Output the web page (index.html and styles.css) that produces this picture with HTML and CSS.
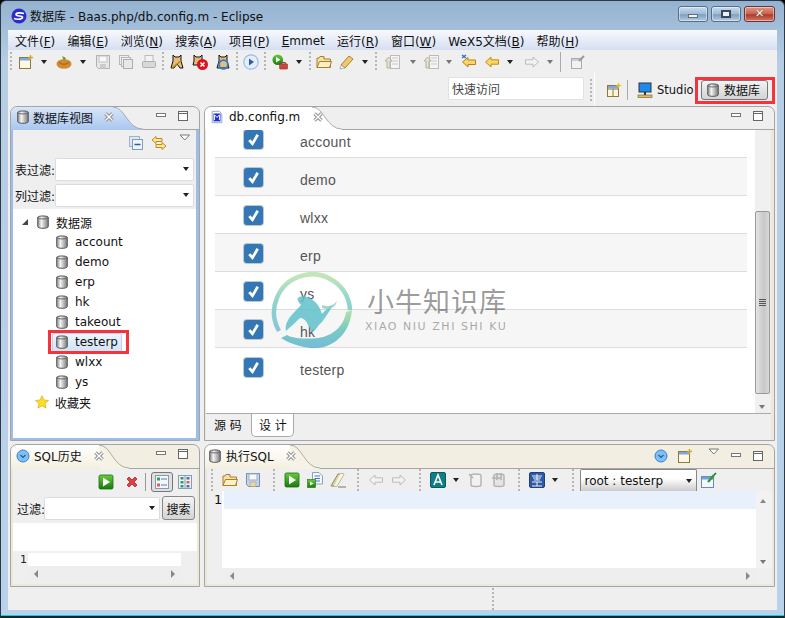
FILE: index.html
```html
<!DOCTYPE html>
<html lang="zh">
<head>
<meta charset="utf-8">
<title>数据库 - Baas.php/db.config.m - Eclipse</title>
<link rel="stylesheet" href="styles.css">
</head>
<body>
<svg class="defs" width="0" height="0">
  <defs>
    <linearGradient id="blueTab" x1="0" x2="0" y1="0" y2="1"><stop offset="0" stop-color="#d8e6f8"/><stop offset="1" stop-color="#a9c6f0"/></linearGradient>
    <linearGradient id="cyl" x1="0" x2="1" y1="0" y2="0"><stop offset="0" stop-color="#8a8a8a"/><stop offset=".35" stop-color="#f4f4f4"/><stop offset="1" stop-color="#777"/></linearGradient>
    <linearGradient id="grn" x1="0" x2="0" y1="0" y2="1"><stop offset="0" stop-color="#6ccb3a"/><stop offset="1" stop-color="#167a10"/></linearGradient>
    <linearGradient id="ring" x1="0" x2="0" y1="0" y2="1"><stop offset="0" stop-color="#b6e0a4"/><stop offset=".5" stop-color="#72c9c0"/><stop offset="1" stop-color="#6fb8d6"/></linearGradient>
    <symbol id="db" viewBox="1.5 1 13 14.5"><path d="M2.5 3.5C2.5 1.5 13.5 1.5 13.5 3.5V13C13.5 15.4 2.5 15.4 2.5 13Z" fill="url(#cyl)" stroke="#555"/><path d="M2.5 3.5C2.5 5.6 13.5 5.6 13.5 3.5" fill="none" stroke="#666"/></symbol>
    <symbol id="x" viewBox="0 0 12 12"><path d="M2.5 2.5L9.5 9.5M9.5 2.5L2.5 9.5" stroke="#8d8d8d" stroke-width="3.2" fill="none"/><path d="M2.5 2.5L9.5 9.5M9.5 2.5L2.5 9.5" stroke="#fff" stroke-width="1.4" fill="none"/></symbol>
    <symbol id="min" viewBox="0 0 12 12"><rect x="1.5" y="3.5" width="9" height="3" fill="#fff" stroke="#777"/></symbol>
    <symbol id="max" viewBox="0 0 12 12"><rect x="1.5" y="1.5" width="9" height="9" fill="#fff" stroke="#666"/><path d="M1.5 3.5H10.5" stroke="#666"/></symbol>
    <symbol id="vm" viewBox="0 0 12 12"><path d="M1 3H10.5L5.8 8Z" fill="#fff" stroke="#777"/></symbol>
    <symbol id="new" viewBox="0 0 16 16"><rect x="1.5" y="3.5" width="11" height="11" fill="#fff8e0" stroke="#8a7a40"/><rect x="2" y="4" width="10" height="2.5" fill="#7fa8dc"/><path d="M12.5 1V6M10 3.5H15" stroke="#d9a520" stroke-width="1.4"/></symbol>
    <symbol id="fruit" viewBox="0 0 16 16"><ellipse cx="8" cy="10" rx="7.5" ry="4.8" fill="#d28a30"/><path d="M3 8C5 11 11 11 13 8" stroke="#9b5d16" fill="none"/><path d="M8 7L6 2L10 4Z" fill="#55a030"/></symbol>
    <symbol id="save" viewBox="0 0 16 16"><path d="M1.5 1.5H14.5V14.5H3.5L1.5 12.5Z" fill="#e8e8e8" stroke="#aeaeae"/><rect x="4" y="2" width="8" height="6" fill="#f8f8f8" stroke="#c0c0c0"/><rect x="5" y="10" width="6" height="4.5" fill="#ccc"/></symbol>
    <symbol id="savec" viewBox="0 0 16 16"><path d="M1.5 1.5H14.5V14.5H3.5L1.5 12.5Z" fill="#c4d4ea" stroke="#6f8fb8"/><rect x="4" y="2" width="8" height="6" fill="#f8f8f8" stroke="#9fb2cc"/><rect x="5" y="10" width="6" height="4.5" fill="#e8d8a0" stroke="#998" stroke-width=".5"/></symbol>
    <symbol id="saveall" viewBox="0 0 16 16"><rect x="1.5" y="1.5" width="9" height="9" fill="#eee" stroke="#b8b8b8"/><rect x="3.5" y="3.5" width="9" height="9" fill="#eee" stroke="#b8b8b8"/><rect x="5.5" y="5.5" width="9" height="9" fill="#e8e8e8" stroke="#aeaeae"/></symbol>
    <symbol id="print" viewBox="0 0 16 16"><rect x="4" y="1.5" width="8" height="6" fill="#f3f3f3" stroke="#bbb"/><rect x="1.5" y="7.5" width="13" height="6" rx="1" fill="#d8d8d8" stroke="#aeaeae"/></symbol>
    <symbol id="cat" viewBox="0 0 16 16"><path d="M4 1L6 3H10L12 1V7L14 14H11L8 10L5 14H2L4 7Z" fill="#e6bc7c" stroke="#111"/><path d="M3 14L13 6" stroke="#b8860b" stroke-width="1.5"/></symbol>
    <symbol id="catx" viewBox="0 0 16 16"><path d="M2 1L4 3H8L10 1V7L12 11H1L2 7Z" fill="#e6bc7c" stroke="#111"/><circle cx="10.5" cy="10.5" r="5.5" fill="#e01020"/><path d="M8.5 8.5L12.5 12.5M12.5 8.5L8.5 12.5" stroke="#fff" stroke-width="1.6"/></symbol>
    <symbol id="catr" viewBox="0 0 16 16"><path d="M4 1L6 3H10L12 1V7L14 14H2L4 7Z" fill="#e6bc7c" stroke="#111"/><circle cx="8.5" cy="10.5" r="4.4" fill="none" stroke="#2a7fd0" stroke-width="1.8"/></symbol>
    <symbol id="playc" viewBox="0 0 16 16"><circle cx="8" cy="8" r="7.2" fill="#e4eefb" stroke="#9bbbe4" stroke-width="1.2"/><path d="M6 4.5L11 8L6 11.5Z" fill="#2b5ea8"/></symbol>
    <symbol id="runb" viewBox="0 0 18 18"><circle cx="6.5" cy="6.5" r="6" fill="url(#grn)"/><path d="M4.5 3.5L9.5 6.5L4.5 9.5Z" fill="#fff"/><rect x="8.5" y="11" width="9" height="6" rx="1" fill="#c9463c" stroke="#8a2a22" stroke-width=".6"/><path d="M11 11V9.5H15V11" fill="none" stroke="#8a2a22"/></symbol>
    <symbol id="folder" viewBox="0 0 16 16"><path d="M1 13.5V4H3L4 2.5H8V5H14.5V13.5Z" fill="#f6e0a8" stroke="#a87f2a"/><path d="M1 13.5L3.5 7.5H15.5L13.5 13.5Z" fill="#fdf0c4" stroke="#a87f2a"/></symbol>
    <symbol id="pen" viewBox="0 0 16 16"><path d="M2 11L10 2L14 5L6 14Z" fill="#f0c870" stroke="#a87f2a"/><path d="M1 15L2 11L6 14Z" fill="#fff" stroke="#888" stroke-width=".6"/></symbol>
    <symbol id="next" viewBox="0 0 16 16"><rect x="6.5" y="1.5" width="9" height="13" fill="#f4f4f4" stroke="#bbb"/><path d="M8 4H14M8 7H14M8 10H14" stroke="#c8c8c8"/><path d="M1 7L4.5 3L8 7H6V14H3V7Z" fill="#e8e3c8" stroke="#b3b3a0"/></symbol>
    <symbol id="lback" viewBox="0 0 16 16"><path d="M1.5 8L7 3.5V6H14.5V10.5H7V13Z" fill="#f8d66a" stroke="#b98112"/><path d="M1 1L5 4M5 1L1 4" stroke="#2a6ad0" stroke-width="1.2"/></symbol>
    <symbol id="back" viewBox="0 0 16 16"><path d="M1.5 8L7 3V5.8H14.5V10.2H7V13Z" fill="#f8d66a" stroke="#c98a12"/></symbol>
    <symbol id="fwdg" viewBox="0 0 16 16"><path d="M14.5 8L9 3V5.8H1.5V10.2H9V13Z" fill="#f2f2f2" stroke="#bcbcbc"/></symbol>
    <symbol id="backg" viewBox="0 0 16 16"><path d="M1.5 8L7 3V5.8H14.5V10.2H7V13Z" fill="#f2f2f2" stroke="#bcbcbc"/></symbol>
    <symbol id="pin" viewBox="0 0 16 16"><rect x="1.5" y="4.5" width="10" height="10" fill="#f2f2f2" stroke="#aaa"/><rect x="2" y="5" width="9" height="2" fill="#ccd"/><path d="M9 7L14 2" stroke="#9a9a9a" stroke-width="2"/></symbol>
    <symbol id="persp" viewBox="0 0 16 16"><rect x="1.5" y="3.5" width="11" height="11" fill="#fff6d8" stroke="#8a7a40"/><path d="M1.5 7H12.5M7 7V14.5" stroke="#8a7a40"/><rect x="2" y="4" width="10" height="2.5" fill="#7fa8dc"/><path d="M12.5 0.5L13.6 3L16 3.5L13.6 4.2L12.5 7L11.4 4.2L9 3.5L11.4 3Z" fill="#e8b820"/></symbol>
    <symbol id="studio" viewBox="0 0 16 16"><rect x="2" y="1" width="12" height="9" fill="#1a8cf0" stroke="#333"/><path d="M8 10V13" stroke="#333" stroke-width="2"/><rect x="1" y="13" width="14" height="2.5" fill="#e8c040" stroke="#555" stroke-width=".6"/></symbol>
    <symbol id="collapse" viewBox="0 0 16 16"><rect x="1.5" y="1.5" width="10" height="10" fill="#dfe7f2" stroke="#9db2cc"/><rect x="4.5" y="4.5" width="10" height="10" fill="#f0f5fb" stroke="#7f9cc0"/><path d="M6.5 9.5H12.5" stroke="#2a5ea8" stroke-width="1.5"/></symbol>
    <symbol id="sync" viewBox="0 0 16 16"><path d="M1 5L5 1.5V3.5H11V6.5H5V8.5Z" fill="#f9e6a8" stroke="#c08a18"/><path d="M15 11L11 7.5V9.5H5V12.5H11V14.5Z" fill="#f9e6a8" stroke="#c08a18"/></symbol>
    <symbol id="play" viewBox="0 0 16 16"><rect x="1" y="1" width="14" height="14" rx="1.5" fill="url(#grn)" stroke="#176e10" stroke-width=".8"/><path d="M5 3.5L12 8L5 12.5Z" fill="#fff"/></symbol>
    <symbol id="redx" viewBox="0 0 16 16"><path d="M3 5L5 3L8 6L11 3L13 5L10 8L13 11L11 13L8 10L5 13L3 11L6 8Z" fill="#e04040" stroke="#b52424" stroke-width=".8"/></symbol>
    <symbol id="list1" viewBox="0 0 16 16"><rect x="1.5" y="1.5" width="13" height="13" fill="#f3f6fa" stroke="#8a9ab0"/><rect x="3" y="3.5" width="3" height="3" fill="#2fa060"/><path d="M7 5H13M7 11H13" stroke="#5a7fb0"/><rect x="3" y="9.5" width="3" height="3" fill="#e06050"/></symbol>
    <symbol id="list2" viewBox="0 0 16 16"><rect x="1.5" y="1.5" width="13" height="13" fill="#eef3fa" stroke="#8a9ab0"/><path d="M8 1.5V14.5" stroke="#8a9ab0"/><rect x="3.5" y="3" width="3" height="2.5" fill="#2fa060"/><rect x="3.5" y="7" width="3" height="2.5" fill="#2fa060"/><rect x="3.5" y="11" width="3" height="2.5" fill="#2fa060"/><rect x="9.5" y="3" width="3" height="2.5" fill="#4a74b8"/><rect x="9.5" y="7" width="3" height="2.5" fill="#e06050"/><rect x="9.5" y="11" width="3" height="2.5" fill="#4a74b8"/></symbol>
    <symbol id="hist" viewBox="0 0 14 14"><circle cx="7" cy="7" r="6" fill="#7ec0f4" stroke="#3d7fc8"/><path d="M4.5 6L7 8.5L9.5 6" fill="none" stroke="#245a9c" stroke-width="1.2"/></symbol>
    <symbol id="mfile" viewBox="0 0 16 16"><path d="M2.5 1.5H10.5L13.5 4.5V14.5H2.5Z" fill="#fff" stroke="#8aa0c0"/><rect x="4" y="4" width="8" height="9" fill="#1f2fd8"/><path d="M5.2 11.5V5.5L8 8.5L10.8 5.5V11.5" fill="none" stroke="#fff" stroke-width="1.1"/></symbol>
    <symbol id="sqlrun" viewBox="0 0 16 16"><path d="M5.5 .5H12L15.5 4V12H5.5Z" fill="#f4f7fc" stroke="#8aa0c0"/><path d="M7.5 4H13M7.5 6.5H13M7.5 9H13" stroke="#4a74b8"/><rect x=".5" y="7.5" width="8" height="8" fill="url(#grn)" stroke="#176e10" stroke-width=".6"/><path d="M3 9.5L6.5 11.5L3 13.5Z" fill="#fff"/></symbol>
    <symbol id="eraser" viewBox="0 0 16 16"><path d="M1 14L8 2H14L7 14Z" fill="#d8d4a8" stroke="#8c8a60"/><path d="M10 2H14L7 14H4Z" fill="#f6f4e0"/><path d="M8 15H16" stroke="#777"/></symbol>
    <symbol id="afmt" viewBox="0 0 16 16"><rect x=".5" y=".5" width="15" height="15" rx="1.5" fill="#0e7f86" stroke="#0a5a60"/><path d="M4 13L8 3L12 13M5.5 10H10.5" fill="none" stroke="#fff" stroke-width="1.6"/></symbol>
    <symbol id="dbg1" viewBox="0 0 16 16"><path d="M3 3.5C3 1.5 13 1.5 13 3.5V13C13 15 3 15 3 13Z" fill="#f2f2f2" stroke="#b2b2b2" stroke-width="1.4"/><path d="M1 2L5 6" stroke="#b2b2b2" stroke-width="1.6"/></symbol>
    <symbol id="dbg2" viewBox="0 0 16 16"><path d="M3 3.5C3 1.5 13 1.5 13 3.5V13C13 15 3 15 3 13Z" fill="#e4e4e4" stroke="#b2b2b2" stroke-width="1.4"/><path d="M6 1V8M10 1V8M1 6H9" stroke="#b2b2b2" stroke-width="1.6"/></symbol>
    <symbol id="zheng" viewBox="0 0 16 16"><rect x=".5" y=".5" width="15" height="15" rx="1.5" fill="#2f5aa8" stroke="#1f3f80"/><path d="M3 4H13M8 2V8M4 6H12M3 10H13M8 10V14M3 14H13M5 8H11" stroke="#fff" stroke-width=".9"/></symbol>
    <symbol id="conn" viewBox="0 0 16 16"><rect x=".5" y="4.5" width="12" height="11" fill="#f4f8fd" stroke="#6a8ab0"/><rect x="1" y="5" width="11" height="2.5" fill="#6ea0dc"/><path d="M7 10L13 3" stroke="#2f9a2f" stroke-width="2.4"/><path d="M13 3L15 1" stroke="#176e10" stroke-width="1.5"/></symbol>
    <symbol id="star" viewBox="0 0 16 16"><path d="M8 .8L10.2 5.7L15.5 6.2L11.5 9.7L12.7 15L8 12.2L3.3 15L4.5 9.7L.5 6.2L5.8 5.7Z" fill="#ffe020" stroke="#c8a020" stroke-width=".7"/></symbol>
    <symbol id="tick" viewBox="0 0 18 18"><path d="M5 9.5L8 13L13 4.5" fill="none" stroke="#fff" stroke-width="2.6"/></symbol>
  </defs>
</svg>

<div class="window">
  <header class="titlebar">
    <svg class="app-icon" viewBox="0 0 16 16"><circle cx="8" cy="8" r="7.5" fill="#2c2ccc"/><path d="M3 10.5C7 12 12 11 11.5 9C11 7.5 5 8.5 5 6.5C5 4.5 10 4.5 13 5.5" fill="none" stroke="#fff" stroke-width="1.7"/></svg>
    <span class="title">数据库 - Baas.php/db.config.m - Eclipse</span>
    <div class="win-btns">
      <div class="win-btn"><span class="g-min"></span></div>
      <div class="win-btn"><span class="g-max"></span></div>
      <div class="win-btn close"><span class="g-close">✕</span></div>
    </div>
  </header>

  <div class="client">
    <nav class="menubar">
      <span>文件(<u>F</u>)</span><span>编辑(<u>E</u>)</span><span>浏览(<u>N</u>)</span><span>搜索(<u>A</u>)</span><span>项目(<u>P</u>)</span><span><u>E</u>mmet</span><span>运行(<u>R</u>)</span><span>窗口(<u>W</u>)</span><span>WeX5文档(<u>B</u>)</span><span>帮助(<u>H</u>)</span>
    </nav>

    <div class="toolbar main-tools">
      <i class="handle first"></i>
      <svg class="ic"><use href="#new"/></svg><b class="arrow"></b>
      <svg class="ic plus1"><use href="#fruit"/></svg><b class="arrow"></b>
      <svg class="ic"><use href="#save"/></svg>
      <svg class="ic"><use href="#saveall"/></svg>
      <svg class="ic"><use href="#print"/></svg>
      <i class="handle"></i>
      <svg class="ic"><use href="#cat"/></svg>
      <svg class="ic"><use href="#catx"/></svg>
      <svg class="ic"><use href="#catr"/></svg>
      <i class="handle"></i>
      <svg class="ic"><use href="#playc"/></svg>
      <i class="handle"></i>
      <svg class="ic push1 plus1"><use href="#runb"/></svg><b class="arrow"></b>
      <i class="handle"></i>
      <svg class="ic"><use href="#folder"/></svg>
      <svg class="ic"><use href="#pen"/></svg><b class="arrow"></b>
      <i class="handle"></i>
      <svg class="ic push2 plus3"><use href="#next"/></svg><b class="arrow gray tight"></b>
      <svg class="ic"><use href="#next"/></svg><b class="arrow gray"></b>
      <svg class="ic"><use href="#lback"/></svg>
      <svg class="ic"><use href="#back"/></svg><b class="arrow"></b>
      <svg class="ic push2"><use href="#fwdg"/></svg><b class="arrow gray"></b>
      <i class="sep"></i>
      <svg class="ic"><use href="#pin"/></svg>
    </div>

    <div class="persp-bar">
      <div class="quick">快速访问</div>
      <i class="handle tall"></i>
      <i class="thin-sep"></i>
      <svg class="ic persp-ic"><use href="#persp"/></svg>
      <i class="sep short"></i>
      <svg class="ic studio-ic"><use href="#studio"/></svg>
      <span class="studio-label">Studio</span>
      <div class="persp-active"><div class="persp-btn"><svg class="ic-s"><use href="#db"/></svg><span>数据库</span></div></div>
    </div>

    <main class="panes">
      <section class="pane blue">
        <div class="pane-head">
          <div class="tab active-blue"><svg class="ic-s"><use href="#db"/></svg><span>数据库视图</span><svg class="ic-x"><use href="#x"/></svg></div>
          <svg class="curve" viewBox="0 0 34 24" preserveAspectRatio="none"><path d="M0 0C14 0 16 23 34 23V24H0Z" fill="url(#blueTab)"/><path d="M0 0C14 0 16 23 34 23" fill="none" stroke="#a5a5a5"/></svg>
          <div class="head-rest"><svg class="ic-c"><use href="#min"/></svg><svg class="ic-c"><use href="#max"/></svg></div>
        </div>
        <div class="pane-body blue-body">
          <div class="view-tools"><svg class="ic"><use href="#collapse"/></svg><svg class="ic"><use href="#sync"/></svg><svg class="ic-c vm"><use href="#vm"/></svg></div>
          <div class="filter"><label>表过滤:</label><div class="combo"><b class="arrow"></b></div></div>
          <div class="filter"><label>列过滤:</label><div class="combo"><b class="arrow"></b></div></div>
          <ul class="tree">
            <li class="root"><span class="tw"></span><svg class="ic-s"><use href="#db"/></svg>数据源</li>
            <li><svg class="ic-s"><use href="#db"/></svg>account</li>
            <li><svg class="ic-s"><use href="#db"/></svg>demo</li>
            <li><svg class="ic-s"><use href="#db"/></svg>erp</li>
            <li><svg class="ic-s"><use href="#db"/></svg>hk</li>
            <li><svg class="ic-s"><use href="#db"/></svg>takeout</li>
            <li class="selected"><svg class="ic-s"><use href="#db"/></svg>testerp</li>
            <li><svg class="ic-s"><use href="#db"/></svg>wlxx</li>
            <li><svg class="ic-s"><use href="#db"/></svg>ys</li>
            <li class="fav"><svg class="ic-s"><use href="#star"/></svg>收藏夹</li>
          </ul>
        </div>
      </section>

      <section class="pane">
        <div class="pane-head">
          <div class="tab white"><svg class="ic-s"><use href="#mfile"/></svg><span class="tab-latin">db.config.m</span><svg class="ic-x"><use href="#x"/></svg></div>
          <svg class="curve" viewBox="0 0 34 24" preserveAspectRatio="none"><path d="M0 0C14 0 16 23 34 23V24H0Z" fill="#fff"/><path d="M0 0C14 0 16 23 34 23" fill="none" stroke="#a5a5a5"/></svg>
          <div class="head-rest"><svg class="ic-c"><use href="#min"/></svg><svg class="ic-c"><use href="#max"/></svg></div>
        </div>
        <div class="editor-body">
          <div class="design">
            <div class="db-list">
              <div class="db-row"><span class="cb"><svg><use href="#tick"/></svg></span><span>account</span></div>
              <div class="db-row"><span class="cb"><svg><use href="#tick"/></svg></span><span>demo</span></div>
              <div class="db-row"><span class="cb"><svg><use href="#tick"/></svg></span><span>wlxx</span></div>
              <div class="db-row"><span class="cb"><svg><use href="#tick"/></svg></span><span>erp</span></div>
              <div class="db-row"><span class="cb"><svg><use href="#tick"/></svg></span><span>ys</span></div>
              <div class="db-row"><span class="cb"><svg><use href="#tick"/></svg></span><span>hk</span></div>
              <div class="db-row last"><span class="cb"><svg><use href="#tick"/></svg></span><span>testerp</span></div>
            </div>
            <div class="vscroll"><div class="thumb"><span class="grip"></span></div><b class="arrow gray sm"></b></div>
          </div>
          <div class="subtabs"><span class="sub">源 码</span><span class="sub on">设 计</span></div>
        </div>
      </section>

      <section class="pane beige">
        <div class="pane-head small">
          <div class="tab beige-tab"><svg class="ic-h"><use href="#hist"/></svg><span>SQL历史</span><svg class="ic-x"><use href="#x"/></svg></div>
          <svg class="curve" viewBox="0 0 34 24" preserveAspectRatio="none"><path d="M0 0C14 0 16 23 34 23V24H0Z" fill="#f6f3e6"/><path d="M0 0C14 0 16 23 34 23" fill="none" stroke="#a5a5a5"/></svg>
          <div class="head-rest"><svg class="ic-c"><use href="#min"/></svg><svg class="ic-c"><use href="#max"/></svg></div>
        </div>
        <div class="hist-body">
          <div class="hist-tools"><svg class="ic"><use href="#play"/></svg><svg class="ic"><use href="#redx"/></svg><i class="vline"></i><span class="toggle"><svg class="ic"><use href="#list1"/></svg></span><svg class="ic"><use href="#list2"/></svg></div>
          <div class="hist-filter"><label>过滤:</label><div class="combo short-combo"><b class="arrow"></b></div><button class="search">搜索</button></div>
          <div class="hist-list"></div>
          <div class="hist-code"><span class="lnum">1</span><span class="hist-line"></span></div>
          <div class="hscroll short"><b class="tri-l"></b><b class="tri-r"></b></div>
        </div>
      </section>

      <section class="pane beige">
        <div class="pane-head small">
          <div class="tab beige-tab sql"><svg class="ic-s"><use href="#db"/></svg><span>执行SQL</span><svg class="ic-x"><use href="#x"/></svg></div>
          <svg class="curve" viewBox="0 0 34 24" preserveAspectRatio="none"><path d="M0 0C14 0 16 23 34 23V24H0Z" fill="#f6f3e6"/><path d="M0 0C14 0 16 23 34 23" fill="none" stroke="#a5a5a5"/></svg>
          <div class="head-rest sql-rest"><svg class="ic-h"><use href="#hist"/></svg><svg class="ic"><use href="#new"/></svg><svg class="ic-c vm2"><use href="#vm"/></svg><svg class="ic-c"><use href="#min"/></svg><svg class="ic-c"><use href="#max"/></svg></div>
        </div>
        <div class="sql-body">
          <div class="toolbar sql-tools">
            <i class="handle first"></i>
            <svg class="ic"><use href="#folder"/></svg>
            <svg class="ic"><use href="#savec"/></svg>
            <i class="handle"></i>
            <svg class="ic"><use href="#play"/></svg>
            <svg class="ic"><use href="#sqlrun"/></svg>
            <svg class="ic"><use href="#eraser"/></svg>
            <i class="handle"></i>
            <svg class="ic"><use href="#backg"/></svg>
            <svg class="ic"><use href="#fwdg"/></svg>
            <i class="handle"></i>
            <svg class="ic"><use href="#afmt"/></svg><b class="arrow"></b>
            <svg class="ic"><use href="#dbg1"/></svg>
            <svg class="ic"><use href="#dbg2"/></svg>
            <i class="handle"></i>
            <svg class="ic"><use href="#zheng"/></svg><b class="arrow"></b>
            <i class="handle"></i>
            <div class="conn-combo"><span>root : testerp</span><b class="arrow"></b></div>
            <svg class="ic"><use href="#conn"/></svg>
          </div>
          <div class="sql-edit">
            <div class="gutter">1</div>
            <div class="code"><div class="cur-line"></div></div>
            <div class="vscroll thin"><b class="arrow up sm"></b><b class="arrow gray sm"></b></div>
          </div>
          <div class="hscroll sql-h"><b class="tri-l"></b><b class="tri-r"></b></div>
        </div>
      </section>
    </main>

    <footer class="status"><i class="handle tall"></i></footer>
  </div>

  <div class="watermark">
    <svg class="wm-logo" viewBox="270 268 90 90">
      <path d="M279 331A38 38 0 1 1 350 310" fill="none" stroke="url(#ring)" stroke-width="4.5" opacity=".8"/>
      <path d="M281 338C290 344 305 349 318 348C336 346 350 332 352 310L346 312C344 326 333 336 318 338C306 339 294 339 287 335Z" fill="url(#ring)" opacity=".95"/>
      <path d="M286 331C284 320 295 312 301 305C298 301 294 297 304 296C312 298 319 303 322 314C325 310 329 307 333 305C330 311 326 316 322 322C316 327 316 332 311 331C308 325 306 318 300 318C295 323 290 327 286 331Z" fill="#5fbfca" opacity=".85"/>
      <path d="M322 305C328 307 333 306 337 301C335 309 328 310 322 308Z" fill="#8ccfc0" opacity=".8"/>
    </svg>
    <div class="wm-text">
      <div class="wm-cn">小牛知识库</div>
      <div class="wm-en">XIAO NIU ZHI SHI KU</div>
    </div>
  </div>
  <div class="red-box rb-tree"></div>
  <div class="red-box rb-persp"></div>
</div>
</body>
</html>
```
FILE: styles.css
```css
* { box-sizing: border-box; }
html, body { margin: 0; padding: 0; }
body { width: 785px; height: 618px; overflow: hidden; background: #000; font: 12px "DejaVu Sans", "Noto Sans CJK SC", sans-serif; color: #111; }
.defs { position: absolute; }
ul { list-style: none; margin: 0; padding: 0; }

.window { position: relative; width: 785px; height: 618px; border: 1px solid #2b3a44; border-bottom: 2px solid #0d2a33; border-radius: 6px 6px 0 0; background: linear-gradient(#94b2d0 0, #b6cde4 60px, #b9d2ea 100%); display: flex; flex-direction: column; box-shadow: inset 0 -1px 0 #25c3e3; }

.titlebar { height: 29px; flex: none; display: flex; align-items: center; padding: 0 9px 0 10px; }
.app-icon { width: 16px; height: 16px; margin-right: 3px; }
.title { font-size: 12px; color: #111; white-space: nowrap; }
.win-btns { margin-left: auto; display: flex; gap: 3px; margin-top: -4px; }
.win-btn { width: 30px; height: 16px; border: 1px solid #566f86; border-radius: 3px; background: linear-gradient(#c9dcee 0, #9ebad6 50%, #7f9fbe 55%, #b5cde4 100%); display: flex; align-items: center; justify-content: center; box-shadow: inset 0 0 0 1px rgba(255,255,255,.45); }
.win-btn.close { border-color: #703030; background: linear-gradient(#e09a8c 0, #c8604c 50%, #a93a28 55%, #d07a66 100%); width: 31px; }
.g-min { width: 10px; height: 4px; background: #f2f6fa; border: 1px solid #5d6e80; margin-top: 5px; }
.g-max { width: 10px; height: 8px; border: 2px solid #3c4a58; background: #eaf0f6; }
.g-close { color: #f6f3f0; font-weight: bold; font-size: 11px; line-height: 1; text-shadow: 0 0 1px #552; }

.client { margin: 0 7px; flex: none; height: 580px; background: #efefef; display: flex; flex-direction: column; }

.menubar { height: 20px; flex: none; display: flex; gap: 12.2px; padding: 1px 0 0 7px; align-items: center; background: linear-gradient(#f8f9fd 0, #d6dff1 100%); font-size: 12px; white-space: nowrap; }

.toolbar { height: 23px; flex: none; display: flex; align-items: center; padding-left: 2px; }
.ic { width: 16px; height: 16px; margin-right: 7px; flex: none; }
.ic.plus1 { margin-right: 8px; }
.ic.plus3 { margin-right: 10px; }
.ic.push1 { margin-left: 1px; }
.ic.push2 { margin-left: 2px; }
.arrow { width: 0; height: 0; border: 3.5px solid transparent; border-top: 4px solid #222; border-bottom: 0; margin-right: 9px; flex: none; }
.arrow.tight { margin-right: 7px; }
.arrow.gray { border-top-color: #777; }
.arrow.up { border-top: 0; border-bottom: 4px solid #888; }
.handle { width: 3px; height: 19px; flex: none; margin: 0 4px 0 -2px; background-image: linear-gradient(#b5b5b5 50%, transparent 50%); background-size: 2px 4px; background-repeat: repeat-y; }
.handle.first { margin: 0 5px 0 0; }
.sep { width: 1px; height: 20px; background: #aaa; margin: 0 9px 0 -2px; flex: none; }

.persp-bar { height: 33px; flex: none; display: flex; align-items: center; padding-left: 440px; }
.quick { width: 136px; height: 23px; background: #fff; border: 1px solid #e2e2e2; border-radius: 2px; padding: 2px 3px; color: #444; margin: -2px 6px 0 0; }
.handle.tall { margin: 0; height: 22px; }
.thin-sep { width: 1px; height: 33px; background: #fff; margin: 0 11px 0 1px; }
.persp-ic { margin: 0 5px 0 0; }
.sep.short { margin: 0 9px 0 0; }
.studio-ic { margin-right: 4px; }
.studio-label { font-size: 11.5px; width: 37px; white-space: nowrap; }
.persp-active { margin-left: 1px; width: 79px; height: 26px; display: flex; align-items: center; justify-content: center; }
.persp-btn { width: 67px; height: 20px; display: flex; align-items: center; gap: 4px; padding-left: 4px; border: 1px solid #777; border-radius: 3px; background: linear-gradient(#f2f2f2, #d4d4d4); }

.panes { flex: none; height: 481px; display: grid; grid-template-columns: 190px 571px; grid-template-rows: 335px 143px; column-gap: 4px; row-gap: 3px; padding-left: 2px; }
.pane { border: 1px solid #a5a5a5; border-radius: 7px 7px 0 0; display: flex; flex-direction: column; min-height: 0; min-width: 0; overflow: hidden; background: #efefef; }
.pane-head { height: 23px; flex: none; display: flex; }
.tab { position: relative; z-index: 1; height: 100%; display: flex; align-items: center; padding: 0 0 3px 5px; white-space: nowrap; flex: none; gap: 3px; border-radius: 6px 0 0 0; }
.ic-s { width: 14px; height: 14px; flex: none; }
.ic-x { width: 12px; height: 12px; margin-left: 7px; flex: none; }
.ic-c { width: 12px; height: 12px; flex: none; }
.ic-h { width: 14px; height: 14px; flex: none; }
.active-blue { width: 102px; background: linear-gradient(#d8e6f8, #a9c6f0); }
.white { width: 107px; background: #fff; padding-left: 5px; gap: 5px; }
.tab-latin { font-size: 12px; }
.beige-tab { width: 88px; background: linear-gradient(#fff, #f3efdf); padding-left: 5px; gap: 4px; }
.beige-tab.sql { width: 85px; padding-left: 3px; gap: 4px; }
.curve { width: 30px; height: 100%; flex: none; }
.head-rest { flex: 1; display: flex; justify-content: flex-end; align-items: flex-start; gap: 10px; padding: 3px 10px 0 0; border-bottom: 1px solid #a5a5a5; }
.sql-rest { align-items: center; padding: 0 10px 2px 0; gap: 0; }
.sql-rest .ic-h { margin-right: 9px; }
.sql-rest .ic { margin-right: 15px; }
.sql-rest .ic-c { margin-right: 10px; }
.sql-rest .ic-c:last-child { margin-right: 0; }
.vm2 { margin-top: -7px; }

.pane-body { flex: 1; min-height: 0; display: flex; flex-direction: column; }
.blue-body { border: 2px solid #9cbcea; border-top: 0; border-right-width: 3px; background: #efefef; }
.view-tools { height: 26px; flex: none; display: flex; justify-content: flex-end; align-items: center; padding-right: 5px; }
.view-tools .ic { margin-right: 7px; }
.view-tools .vm { margin: -10px 0 0 5px; }
.filter { height: 26px; flex: none; display: flex; align-items: center; padding-left: 2px; }
.filter label { width: 40px; white-space: nowrap; font-size: 12px; }
.combo { width: 139px; height: 23px; background: #fff; border: 1px solid #dcdcdc; border-radius: 2px; display: flex; align-items: center; justify-content: flex-end; }
.combo .arrow { margin-right: 4px; border-width: 4px 3.5px 0; }
.tree { flex: 1; margin-top: 1px; background: #fff; padding-top: 3px; font-size: 12px; }
.tree li { height: 20px; display: flex; align-items: center; gap: 6px; padding-left: 42px; position: relative; }
.tree .root { padding-left: 23px; }
.tw { position: absolute; left: 9px; top: 7px; width: 0; height: 0; border-style: solid; border-width: 0 0 6px 6px; border-color: transparent transparent #444 transparent; }
.tree .fav { padding-left: 22px; }
.tree .selected { isolation: isolate; }
.tree .selected::before { content: ""; position: absolute; left: 39px; top: 1px; width: 68px; height: 18px; border: 1px solid #bcd4ef; border-radius: 2px; background: linear-gradient(#eef5fd, #cfe2f8); z-index: -1; }

.editor-body { flex: 1; min-height: 0; display: flex; flex-direction: column; border-left: 1px solid #ece9d8; border-right: 3px solid #ece9d8; }
.design { height: 283px; flex: none; display: flex; background: #fff; overflow: hidden; padding-left: 9px; }
.db-list { width: 532px; flex: none; margin-top: -10px; font: 14px "Liberation Sans", sans-serif; color: #555; letter-spacing: .25px; }
.db-row { height: 38px; display: flex; align-items: center; padding-top: 6px; border-bottom: 1px solid #dcdcdc; }
.db-row:nth-child(even) { background: #f6f6f6; }
.db-row.last { border-bottom: 0; }
.cb { width: 19px; height: 19px; margin: -5px 37px 0 29px; background: #3577b5; border-radius: 3px; box-shadow: 0 0 0 1px #b8c8d8; flex: none; }
.cb svg { width: 19px; height: 19px; display: block; }
.vscroll { margin-left: auto; width: 16px; background: #f0f0f0; position: relative; display: flex; flex-direction: column; align-items: center; flex: none; }
.thumb { position: absolute; top: 81px; left: 0; width: 15px; height: 183px; border: 1px solid #999; border-radius: 2px; background: linear-gradient(90deg, #e4e4e4, #c8c8c8 60%, #d8d8d8); display: flex; align-items: center; justify-content: center; }
.grip { width: 7px; height: 8px; background-image: linear-gradient(#555 50%, transparent 50%); background-size: 7px 2px; }
.arrow.sm { position: absolute; bottom: 4px; left: 4px; margin: 0; }
.arrow.up.sm { top: 8px; bottom: auto; }
.subtabs { flex: none; height: 25px; border-top: 1px solid #aaa; display: flex; align-items: flex-start; font-size: 12px; background: #efefef; }
.sub { width: 45px; height: 21px; display: flex; align-items: center; padding-left: 8px; white-space: nowrap; }
.sub.on { background: #fff; border: 1px solid #aaa; border-top: 0; border-radius: 0 0 5px 5px; width: 43px; height: 23px; padding: 0 0 2px 7px; }

.beige { background: #f2efe2; }
.pane-head.small { height: 24px; }
.hist-body { flex: 1; min-height: 0; border: 2px solid #ece9d8; border-top: 0; background: #efefef; display: flex; flex-direction: column; }
.hist-tools { height: 26px; flex: none; display: flex; align-items: center; justify-content: flex-end; }
.hist-tools .ic { margin-right: 5px; }
.hist-tools > .ic:first-child { margin-right: 10px; }
.hist-tools > .ic:last-child { margin-right: 4px; }
.vline { width: 1px; height: 18px; background: #999; margin-right: 5px; }
.toggle { width: 22px; height: 20px; border: 1px solid #777; border-radius: 3px; background: #e0e0e0; display: flex; align-items: center; justify-content: center; margin-right: 4px; }
.toggle .ic { margin: 0; }
.hist-filter { height: 26px; flex: none; display: flex; align-items: center; padding-left: 4px; }
.hist-filter label { width: 27px; font-size: 12px; white-space: nowrap; }
.short-combo { width: 116px; height: 23px; }
.search { width: 33px; height: 24px; margin-left: 2px; padding: 0; border: 1px solid #888; border-radius: 3px; background: linear-gradient(#f4f4f4, #d4d4d4); font: 12px "DejaVu Sans", "Noto Sans CJK SC", sans-serif; color: #111; }
.hist-list { height: 28px; flex: none; background: #fff; margin-top: 2px; }
.hist-code { height: 13px; flex: none; margin-top: 2px; display: flex; font-size: 11px; line-height: 13px; }
.lnum { width: 15px; text-align: right; padding-right: 1px; color: #222; }
.hist-line { width: 153px; background: #fff; }
.hscroll { height: 15px; flex: none; background: #eee; position: relative; }
.hscroll.short { margin-left: 15px; width: 153px; }
.tri-l, .tri-r { position: absolute; top: 4px; width: 0; height: 0; border: 4px solid transparent; }
.tri-l { left: 6px; border-right: 4px solid #888; border-left: 0; }
.tri-r { right: 6px; border-left: 4px solid #888; border-right: 0; }

.sql-body { flex: 1; min-height: 0; border: 2px solid #ece9d8; border-top: 0; background: #efefef; display: flex; flex-direction: column; }
.sql-tools { height: 22px; padding-left: 4px; }
.sql-tools .handle { height: 22px; margin: 0 8px 0 4.5px; }
.sql-tools .handle.first { margin: 0 8px 0 0; }
.conn-combo { width: 117px; height: 22px; margin: 0 4px 0 -3px; border: 1px solid #888; border-bottom: 0; background: linear-gradient(#fff 40%, #ccc); border-radius: 2px 2px 0 0; display: flex; align-items: center; justify-content: space-between; padding: 0 4px; font-size: 12px; white-space: nowrap; }
.conn-combo .arrow { margin: 0; }
.sql-edit { flex: 1; min-height: 0; display: flex; background: #fff; }
.gutter { width: 17px; background: #efefef; font-size: 13px; padding: 1px 0 0 7px; flex: none; border-right: 2px solid #fff; }
.code { flex: 1; }
.cur-line { height: 18px; background: #e8f0fb; }
.vscroll.thin { width: 16px; position: relative; background: #f2f2f2; }
.hscroll.sql-h { height: 16px; margin-left: 17px; margin-right: 16px; }

.status { flex: 1; display: flex; align-items: center; padding-left: 484px; }

.watermark { position: absolute; left: 269px; top: 267px; display: flex; pointer-events: none; }
.wm-logo { width: 90px; height: 90px; flex: none; }
.wm-text { margin-left: 7px; padding-top: 17px; }
.wm-cn { font: 27px/32px "Noto Sans CJK SC", sans-serif; color: rgba(70,70,70,.55); letter-spacing: 1px; white-space: nowrap; }
.wm-en { font: 11px/14px "DejaVu Sans", sans-serif; color: rgba(100,100,100,.55); letter-spacing: 1.55px; white-space: nowrap; margin: 3px 0 0 -2px; }

.red-box { position: absolute; border: 3px solid #f4333a; pointer-events: none; }
.rb-tree { left: 47px; top: 329px; width: 81px; height: 24px; }
.rb-persp { left: 694px; top: 76px; width: 80px; height: 27px; }
```
